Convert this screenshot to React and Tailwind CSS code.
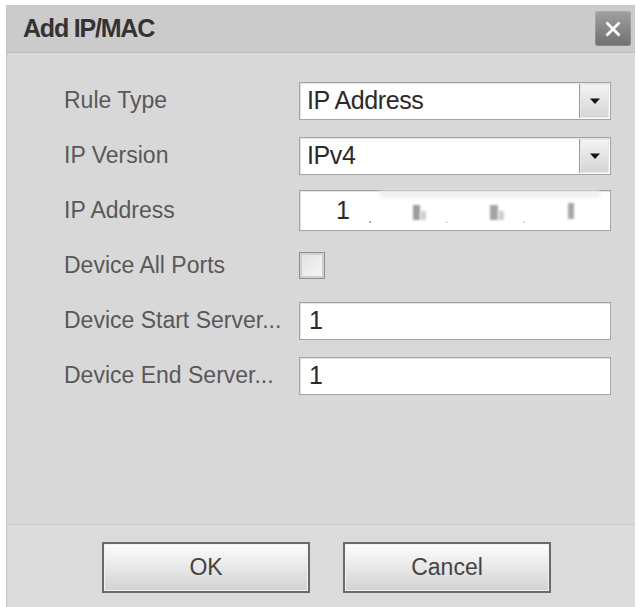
import React from "react";

const font = { fontFamily: '"Liberation Sans", Arial, sans-serif' };

function Label({ children }) {
  return (
    <div className="w-[292px] shrink-0 pl-[57px] text-[23px] leading-none text-[#585858] whitespace-nowrap">
      {children}
    </div>
  );
}

function SelectBox({ value }) {
  return (
    <div className="flex h-[38px] w-[312px] items-stretch border border-[#a3a3a3] bg-white shadow-[inset_1px_1px_1px_rgba(0,0,0,0.12)]">
      <div className="flex flex-1 items-center pl-[7px] text-[25px] leading-none text-[#2a2a2a] tracking-[-0.4px]">
        {value}
      </div>
      <div className="m-[1px] flex w-[30px] items-center justify-center border-l border-[#9a9a9a] bg-gradient-to-b from-[#f4f4f4] to-[#d4d4d4] shadow-[inset_0_0_0_1px_#e8e8e8]">
        <svg width="12" height="8" viewBox="0 0 12 8">
          <path d="M1 1.5h10L6 7z" fill="#111" />
        </svg>
      </div>
    </div>
  );
}

function TextBox({ value }) {
  return (
    <div className="flex h-[38px] w-[312px] items-center border border-[#a3a3a3] bg-white pl-[9px] text-[25px] leading-none text-[#2a2a2a] shadow-[inset_1px_1px_1px_rgba(0,0,0,0.12)]">
      {value}
    </div>
  );
}

function Row({ label, children }) {
  return (
    <div className="flex h-[55px] items-center">
      <Label>{label}</Label>
      {children}
    </div>
  );
}

export default function App() {
  return (
    <div className="min-h-[607px] w-[639px] bg-white pt-[5px]" style={font}>
      <div className="ml-[6px] w-[629px] border-l border-[#c4c4c4] bg-[#d8d8d8]">
        {/* Title bar */}
        <div className="flex h-[48px] items-center justify-between border-b border-[#bdbdbd] bg-[#cbcbcb] pl-[16px] pr-[4px]">
          <span className="text-[25px] font-bold leading-none text-[#333] tracking-[-1.2px]">
            Add IP/MAC
          </span>
          <div className="flex h-[35px] w-[36px] items-center justify-center rounded-[3px] bg-gradient-to-b from-[#a0a0a0] to-[#707070] shadow-[inset_0_0_0_1px_rgba(255,255,255,0.15)]">
            <svg width="20" height="20" viewBox="0 0 20 20">
              <path d="M3.5 3.5L16.5 16.5M16.5 3.5L3.5 16.5" stroke="#fff" strokeWidth="2.8" strokeLinecap="butt" />
            </svg>
          </div>
        </div>

        {/* Body */}
        <div className="h-[472px] border-b border-[#cacaca] pt-[20px]">
          <Row label="Rule Type">
            <SelectBox value="IP Address" />
          </Row>
          <Row label="IP Version">
            <SelectBox value="IPv4" />
          </Row>
          <Row label="IP Address">
            <div className="relative flex h-[41px] w-[312px] items-center border border-[#a3a3a3] bg-white text-[25px] leading-none text-[#2a2a2a] shadow-[inset_1px_1px_1px_rgba(0,0,0,0.12)]">
              <div className="absolute left-[80px] right-[10px] top-0 h-[6px] bg-[#ececec] blur-[2px]" />
              <span className="absolute left-[36px]">1</span>
              <span className="absolute left-[68px] top-[20px] text-[14px] text-[#777]">.</span>
              <div className="absolute left-[113px] top-[14px] h-[15px] w-[7px] bg-[#9c9c9c] blur-[1px]" />
              <div className="absolute left-[120px] top-[20px] h-[9px] w-[6px] bg-[#d0d0d0] blur-[1px]" />
              <span className="absolute left-[145px] top-[22px] text-[12px] text-[#bbb]">.</span>
              <div className="absolute left-[190px] top-[14px] h-[15px] w-[8px] bg-[#a4a4a4] blur-[1px]" />
              <div className="absolute left-[198px] top-[20px] h-[9px] w-[6px] bg-[#d0d0d0] blur-[1px]" />
              <span className="absolute left-[222px] top-[22px] text-[12px] text-[#bbb]">.</span>
              <div className="absolute left-[268px] top-[12px] h-[16px] w-[6px] bg-[#a8a8a8] blur-[1px]" />
            </div>
          </Row>
          <Row label="Device All Ports">
            <div className="h-[27px] w-[26px] border border-[#8f8f8f] bg-gradient-to-br from-[#e2e2e2] to-[#f6f6f6] shadow-[inset_0_0_0_2px_#d0d0d0]" />
          </Row>
          <Row label="Device Start Server...">
            <TextBox value="1" />
          </Row>
          <Row label="Device End Server...">
            <TextBox value="1" />
          </Row>
        </div>

        {/* Footer */}
        <div className="flex h-[82px] gap-[33px] bg-[#dbdbdb] pl-[95px] pt-[17px]">
          <button className="flex h-[51px] w-[208px] items-center justify-center border-2 border-[#6a6a6a] bg-gradient-to-b from-[#fdfdfd] to-[#d2d2d2] text-[23px] leading-none text-[#444] shadow-[inset_0_0_0_1px_#f0f0f0]">
            OK
          </button>
          <button className="flex h-[51px] w-[208px] items-center justify-center border-2 border-[#6a6a6a] bg-gradient-to-b from-[#fdfdfd] to-[#d2d2d2] text-[23px] leading-none text-[#444] shadow-[inset_0_0_0_1px_#f0f0f0]">
            Cancel
          </button>
        </div>
      </div>
    </div>
  );
}
